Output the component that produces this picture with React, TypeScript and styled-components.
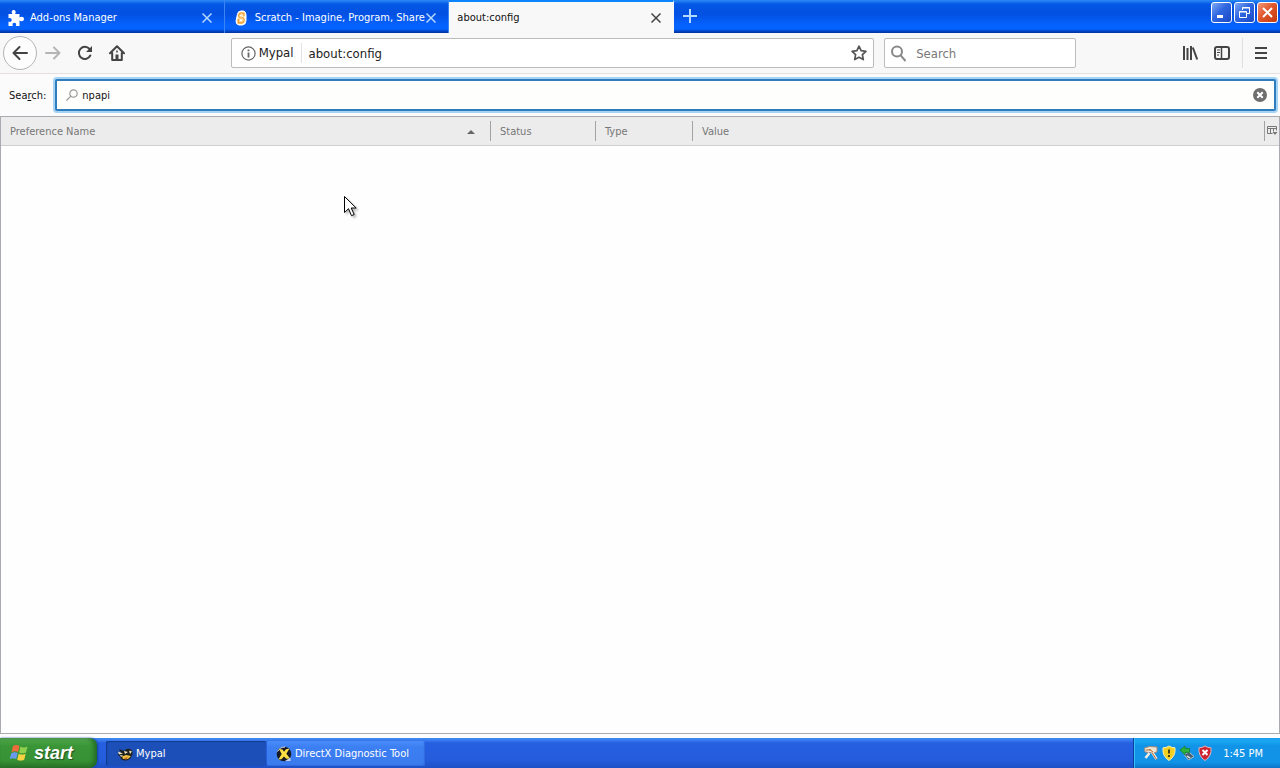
import React, { useState } from "react";
import styled, { createGlobalStyle, css } from "styled-components";

const ui = `"DejaVu Sans Condensed", "DejaVu Sans", "Noto Sans", sans-serif`;

const GlobalStyle = createGlobalStyle`
  *, *::before, *::after { box-sizing: border-box; }
  body { margin: 0; background: #fff; font: 11px/16px ${ui}; color: #111; }
  button, input { font: inherit; color: inherit; margin: 0; padding: 0; border: 0; background: none; }
  button { cursor: default; }
  svg { display: block; flex: none; }
`;

const Desktop = styled.div`
  display: flex;
  flex-direction: column;
  min-height: 100vh;
  background: #fdfdfd;
`;

/* Title bar with tabs */
const TitleBar = styled.header`
  display: flex;
  height: 33px;
  background: linear-gradient(#2b8bf5 0, #1a73ee 2px, #0458e4 4px, #0350e2 14px, #0561fb 24px, #0563fd 29px, #0448c8 31px, #02309a 33px);
`;

const Tabs = styled.div`
  display: flex;
  flex: 0 1 674px;
  min-width: 0;
`;

const Tab = styled.div<{ $active?: boolean }>`
  display: flex;
  flex: 1 1 0;
  min-width: 0;
  align-items: center;
  padding: 2px 12px 0 8px;
  color: #fff;
  border-right: 1px solid #3c85f4;
  ${(p) =>
    p.$active &&
    css`
      color: #111;
      background: #f8f8f9;
      border-top: 2px solid #0a84ff;
      border-right-color: #f8f8f9;
      padding-top: 0;
    `}
`;

const TabLabel = styled.button`
  display: flex;
  flex: 1;
  min-width: 0;
  gap: 6px;
  align-items: center;
  height: 24px;
  overflow: hidden;
  white-space: nowrap;
  text-align: left;
`;

const IconButton = styled.button<{ $size?: number }>`
  display: flex;
  flex: none;
  align-items: center;
  justify-content: center;
  width: ${(p) => p.$size ?? 32}px;
  height: ${(p) => p.$size ?? 32}px;
`;

const WindowButtons = styled.div`
  display: flex;
  gap: 2px;
  margin-left: auto;
  padding: 2px 2px 0 0;
`;

const WindowButton = styled.button<{ $close?: boolean }>`
  display: flex;
  align-items: center;
  justify-content: center;
  width: 21px;
  height: 21px;
  border: 1px solid #fff;
  border-radius: 3px;
  background: ${(p) =>
    p.$close
      ? "linear-gradient(135deg, #f0987a, #e2572c 45%, #c23a10)"
      : "linear-gradient(135deg, #7fa8f5, #2f66e0 45%, #1b48c4)"};
`;

/* Navigation toolbar */
const NavBar = styled.nav`
  display: flex;
  align-items: center;
  height: 41px;
  padding: 0 1px 0 3px;
  background: #f8f8f9;
  border-bottom: 1px solid #e6dfe2;
`;

const BackButton = styled.button`
  display: flex;
  align-items: center;
  justify-content: center;
  width: 34px;
  height: 34px;
  border: 1px solid #b4b4b6;
  border-radius: 50%;
  background: #fdfdfd;
`;

const Spring = styled.div`
  flex: 98 1 0;
`;

const Field = styled.div<{ $grow: number }>`
  display: flex;
  flex: ${(p) => p.$grow} 1 0;
  align-items: center;
  min-width: 0;
  height: 30px;
  border: 1px solid #bcbcbc;
  border-radius: 2px;
  background: #fff;
  color: #222;
  font-size: 13px;
`;

const SearchField = styled(Field)`
  margin-left: 10px;
`;

const Identity = styled.button`
  display: flex;
  flex: none;
  gap: 3px;
  align-items: center;
  height: 20px;
  padding: 0 8px 0 9px;
  border-right: 1px solid #e2e2e4;
`;

const FieldInput = styled.input`
  flex: 1;
  min-width: 0;
  height: 24px;
  padding: 0 6px;
  outline: 0;
  &::placeholder { color: #777; opacity: 1; }
`;

const MenuSlot = styled.div`
  display: flex;
  align-items: center;
  height: 30px;
  margin-left: 4px;
  border-left: 1px solid #e0e0e2;
`;

/* Preference filter */
const FilterRow = styled.form`
  display: flex;
  align-items: center;
  gap: 9px;
  height: 42px;
  padding: 0 4px 0 9px;
  background: #fbfbfc;
`;

const FilterLabel = styled.label`
  padding-top: 2px;
`;

const FilterBox = styled.div`
  display: flex;
  flex: 1;
  align-items: center;
  height: 32px;
  padding-left: 9px;
  border: 2px solid #2f7dbd;
  border-radius: 2px;
  box-shadow: 0 0 0 2px #a5d3f5;
  background: #fefffd;
`;

const FilterInput = styled(FieldInput)`
  padding: 0 4px;
`;

/* Preference table */
const TreeFrame = styled.main`
  flex: 1;
  margin-bottom: 4px;
  border: 1px solid #a8abb0;
  background: #fefefe;
`;

const Tree = styled.table`
  width: 100%;
  table-layout: fixed;
  border-collapse: separate;
  border-spacing: 0;
`;

const Col = styled.col<{ $w?: number }>`
  width: ${(p) => (p.$w ? `${p.$w}px` : "auto")};
`;

const HeadCell = styled.th`
  height: 29px;
  padding: 0;
  background: #ececec;
  border-bottom: 1px solid #cfcfcf;
  color: #777;
  font-weight: 400;
`;

const HeadButton = styled.button<{ $first?: boolean; $picker?: boolean }>`
  display: flex;
  align-items: center;
  justify-content: space-between;
  width: 100%;
  height: 20px;
  padding: ${(p) => (p.$picker ? "0 0 0 2px" : "2px 15px 0 9px")};
  border-left: ${(p) => (p.$first ? "0" : "1px solid #a2a2a2")};
`;

/* Taskbar */
const TaskBar = styled.footer`
  display: flex;
  height: 30px;
  color: #fff;
  background: linear-gradient(#3f8cf0 0, #3a7df0 2px, #265fe0 5px, #245cdc 22px, #1e50c6 30px);
`;

const StartButton = styled.button`
  display: flex;
  gap: 5px;
  align-items: center;
  width: 97px;
  padding: 0 0 0 9px;
  border-radius: 0 8px 8px 0;
  background: linear-gradient(#69b467 0, #49a345 3px, #3a9537 8px, #379235 22px, #2a7428 30px);
  box-shadow: inset -3px 0 4px #236a26, 1px 0 2px #1440a0;
  font: italic 700 18px/24px "Liberation Sans", sans-serif;
  text-shadow: 1px 1px 1px #1e5220;
`;

const Tasks = styled.div`
  display: flex;
  flex: 1;
  min-width: 0;
  gap: 1px;
  padding: 3px 8px 2px 9px;
`;

const Task = styled.button<{ $pressed?: boolean }>`
  display: flex;
  flex: 0 1 ${(p) => (p.$pressed ? 160 : 158)}px;
  align-items: center;
  gap: 3px;
  min-width: 0;
  padding-left: ${(p) => (p.$pressed ? 11 : 9)}px;
  border-radius: 2px;
  white-space: nowrap;
  background: ${(p) => (p.$pressed ? "#1d4fb8" : "linear-gradient(#4a8cf8, #3c7ff2 6px, #3a7bee)")};
  box-shadow: ${(p) => (p.$pressed ? "inset 1px 1px 1px #123a8c" : "inset -1px -1px 1px #2f6bdc")};
`;

const Tray = styled.div`
  display: flex;
  align-items: center;
  gap: 2px;
  padding: 0 17px 0 9px;
  border-left: 1px solid #0a3fa0;
  background: linear-gradient(#1f9cf0 0, #18a8f0 3px, #1193e8 8px, #1194e8 24px, #0f74c8 30px);
  box-shadow: inset 1px 0 0 #3cbcf8;
`;

const Clock = styled.time`
  padding: 1px 0 0 8px;
`;

/* The mouse pointer floats over the page */
const Pointer = styled.svg`
  position: absolute;
  left: 343px;
  top: 195px;
  filter: drop-shadow(2px 2px 1px #0004);
`;

const Cross = ({ color }: { color: string }) => (
  <svg width="10" height="10" viewBox="0 0 10 10" fill="none" stroke={color} strokeWidth="1.5">
    <path d="M.5.5l9 9M9.5.5l-9 9" />
  </svg>
);

const Puzzle = () => (
  <svg width="16" height="16" viewBox="0 0 16 16" fill="#fff">
    <path d="M.5 4h4C3.200 2.600 3.600 0 5.700 0S8.200 2.600 7 4H11.500v3.500c1.500-1.300 4.500-.9 4.500 1.500s-3 2.800-4.500 1.500V16H7.800c.9-1.600.2-3.200-1.500-3.200S4 14.400 4.900 16H.5v-4.500c1.500 1 3.200.2 3.200-1.500S2 7.300.5 8.300z" />
  </svg>
);

const ScratchMark = () => (
  <svg width="16" height="16" viewBox="0 0 16 16" fill="none" strokeLinecap="round" strokeLinejoin="round">
    <path d="M4.500 4Q5 1 8 1h2.500Q13 1.500 13 5v5.500q0 4-3.500 4.500H6Q3 14.500 3 11.500z" fill="#fff6e6" stroke="#fff" />
    <path d="M10.700 5.500V3.500Q6 2.200 6 5.500q0 2 2.500 2.300 2.500.4 2.300 2.700-.3 3-5.300 2.200V9.500" stroke="#f0a030" strokeWidth="2" />
    <path d="M10 6V4Q6.500 3.500 6.500 5.500q0 1.800 2 2.300 2 .6 1.800 2.500-.4 2-3.800 1.400" stroke="#fde0a8" strokeWidth=".8" />
  </svg>
);

const FlagMark = () => (
  <svg width="20" height="20" viewBox="0 0 20 20">
    <path d="M4 3q3.500-2 6.500 0L9 9Q6 7.500 2.500 9z" fill="#ef6b3c" />
    <path d="M11.500 3.500q3 1.800 7 0L17 9.500q-3.800 1.700-7 0z" fill="#8fd04c" />
    <path d="M2.200 10.200q3.500-1.700 6.500 0L7.200 16q-3-1.700-6.500 0z" fill="#6a9af0" />
    <path d="M9.700 10.700q3.400 1.700 7 0L15.200 16.700q-3.500 1.700-7 0z" fill="#f8d340" />
  </svg>
);

const BirdMark = () => (
  <svg width="16" height="16" viewBox="0 0 16 16">
    <path d="M0 5l4 1.500L2 3l5 2q3-3.500 7-1.500 2.500 2 1 6-2 5-7 5-4 0-5-4L.5 8.500l2.500-1z" fill="#1d211c" />
    <path d="M1 5.500l5 2-4 1zM7 5l4 1-3 2zM12 4.500l3 1-2 2.500zM3 9l3 .5-2 1.500z" fill="#efe6c4" />
    <path d="M5 10.500l4-1.500 5 1-3 3H6z" fill="#f0c340" />
    <path d="M7 12l4-1-2 3z" fill="#c36c20" />
  </svg>
);

const DirectXMark = () => (
  <svg width="16" height="16" viewBox="0 0 16 16">
    <circle cx="8" cy="8" r="7.300" fill="#171a24" />
    <path d="M1.500 5.500Q4 1 9 1" stroke="#e7eefb" fill="none" />
    <path d="M3 3l3.500.5L8 5.800l2-2.600 3.500-.7-3.200 5.200 3.700 4.800-3.700.2L8 10.400l-2.600 2.800-3 .2L5.700 8z" fill="#ffe042" />
    <path d="M9 15l5.500-3.500v3.500z" fill="#c8d5e8" />
  </svg>
);

const Shield = ({ alert }: { alert?: boolean }) => (
  <svg width="16" height="16" viewBox="0 0 16 16">
    <path
      d="M8 1q3 2 6 1.800Q15 11 8 15.500 1 11 2 2.800 5 3 8 1z"
      fill={alert ? "#cf2230" : "#f3cf20"}
      stroke={alert ? "#dfb5bd" : "#f5efb0"}
    />
    {alert ? (
      <path d="M5.500 5l5 5M10.500 5l-5 5" stroke="#fff" strokeWidth="2" />
    ) : (
      <path d="M8 4.500v4M8 10v2" stroke="#3b3410" strokeWidth="1.800" />
    )}
  </svg>
);

const ToolsMark = () => (
  <svg width="16" height="16" viewBox="0 0 16 16" fill="none">
    <path d="M1.500 3l5-1.500 7.500.5v5l-4 1-8-1z" fill="#eee5d3" stroke="#a58a78" />
    <path d="M9 7l4.500 7M6.500 8L2.500 13" stroke="#f4ede0" strokeWidth="2.500" />
    <path d="M9 7.500l4.500 7M3 5h5M6 4l4 3" stroke="#b8692c" />
  </svg>
);

const UsbMark = () => (
  <svg width="16" height="16" viewBox="0 0 16 16">
    <path d="M5 9.500l5-2.500 5 4.500L9.500 15z" fill="#4a5f70" stroke="#a9c0ca" />
    <path d="M1 5l5-4v2.500h4.500v4H6V10z" fill="#2db33c" stroke="#14782b" strokeWidth=".7" />
    <path d="M8 11l3 2" stroke="#e4eef0" strokeWidth="1.500" />
  </svg>
);

export default function App() {
  const [filter, setFilter] = useState("npapi");

  return (
    <>
      <GlobalStyle />
      <Desktop>
        <TitleBar>
          <Tabs>
            <Tab>
              <TabLabel><Puzzle />Add-ons Manager</TabLabel>
              <IconButton $size={10} aria-label="Close tab"><Cross color="#b5d9ff" /></IconButton>
            </Tab>
            <Tab>
              <TabLabel><ScratchMark />Scratch - Imagine, Program, Share</TabLabel>
              <IconButton $size={10} aria-label="Close tab"><Cross color="#b5d9ff" /></IconButton>
            </Tab>
            <Tab $active>
              <TabLabel>about:config</TabLabel>
              <IconButton $size={10} aria-label="Close tab"><Cross color="#444" /></IconButton>
            </Tab>
          </Tabs>
          <IconButton aria-label="New tab">
            <svg width="14" height="14" viewBox="0 0 14 14" stroke="#b5d9ff" strokeWidth="2">
              <path d="M7 0v14M0 7h14" />
            </svg>
          </IconButton>
          <WindowButtons>
            <WindowButton aria-label="Minimize">
              <svg width="15" height="15" viewBox="0 0 15 15"><path d="M3 10h6v3H3z" fill="#fff" /></svg>
            </WindowButton>
            <WindowButton aria-label="Restore">
              <svg width="15" height="15" viewBox="0 0 15 15" fill="none" stroke="#fff">
                <path d="M5.500 5V2.500h7v6H10M5 3h8" />
                <path d="M2.500 6.500h7v6h-7zM2 7h8" />
              </svg>
            </WindowButton>
            <WindowButton $close aria-label="Close">
              <svg width="15" height="15" viewBox="0 0 15 15" stroke="#fff" strokeWidth="2"><path d="M3 3l9 9M12 3l-9 9" /></svg>
            </WindowButton>
          </WindowButtons>
        </TitleBar>

        <NavBar>
          <BackButton aria-label="Back">
            <svg width="16" height="16" viewBox="0 0 16 16" fill="none" stroke="#444" strokeWidth="2" strokeLinecap="round" strokeLinejoin="round">
              <path d="M15 8H1.500M7.500 2l-6 6 6 6" />
            </svg>
          </BackButton>
          <IconButton aria-label="Forward">
            <svg width="16" height="16" viewBox="0 0 16 16" fill="none" stroke="#b5b5b7" strokeWidth="2" strokeLinecap="round" strokeLinejoin="round">
              <path d="M1 8h13.500M9 2.500L14.500 8 9 13.500" />
            </svg>
          </IconButton>
          <IconButton aria-label="Reload">
            <svg width="16" height="16" viewBox="0 0 16 16" fill="none" stroke="#444" strokeWidth="2" strokeLinecap="round">
              <path d="M13.300 10.500a6 6 0 1 1-.8-6.500" />
              <path d="M15 1v6H9z" fill="#444" stroke="none" />
            </svg>
          </IconButton>
          <IconButton aria-label="Home">
            <svg width="16" height="16" viewBox="0 0 16 16" fill="none" stroke="#444" strokeWidth="2" strokeLinecap="round" strokeLinejoin="round">
              <path d="M1 8.300L8 1.300l7 7M3.200 8v7h9.600V8" />
              <path d="M6.500 14.500v-5h3v5z" fill="#444" stroke="none" />
              <path d="M8 6v1" strokeWidth="1.500" />
            </svg>
          </IconButton>
          <Spring />
          <Field $grow={644}>
            <Identity>
              <svg width="15" height="15" viewBox="0 0 15 15" fill="none" stroke="#666" strokeWidth="1.200">
                <circle cx="7.500" cy="7.500" r="6.600" />
                <path d="M7.500 6.500v5M7.500 3.500v1.700" strokeWidth="1.800" />
              </svg>
              Mypal
            </Identity>
            <FieldInput aria-label="Address" defaultValue="about:config" />
            <IconButton $size={28} aria-label="Bookmark this page">
              <svg width="16" height="16" viewBox="0 0 16 16" fill="none" stroke="#555" strokeWidth="1.700" strokeLinejoin="round">
                <path d="M8 1.200l2.100 4.400 4.800.7-3.500 3.400.9 4.900L8 12.300l-4.300 2.300.9-4.900L1.100 6.300l4.800-.7z" />
              </svg>
            </IconButton>
          </Field>
          <SearchField $grow={191}>
            <IconButton $size={25} aria-label="Choose search engine">
              <svg width="17" height="17" viewBox="0 0 17 17" fill="none" stroke="#888" strokeWidth="2">
                <circle cx="8" cy="6.500" r="5" /><path d="M11.500 10.200l5 5.800" />
              </svg>
            </IconButton>
            <FieldInput aria-label="Web search" placeholder="Search" />
          </SearchField>
          <Spring />
          <IconButton aria-label="Library">
            <svg width="16" height="16" viewBox="0 0 16 16" fill="none" stroke="#444" strokeWidth="2">
              <path d="M2 1v14M5.500 3v12M9 1v14" /><path d="M10.800 2.500L15.200 14.500" />
            </svg>
          </IconButton>
          <IconButton aria-label="Sidebars">
            <svg width="16" height="16" viewBox="0 0 16 16" fill="none" stroke="#444" strokeWidth="2">
              <rect x="1" y="2" width="14" height="12" rx="2" /><path d="M7.500 2v12" strokeWidth="1.500" />
              <path d="M3 5h3M3 7.500h3M3 10h2" strokeWidth="1" />
            </svg>
          </IconButton>
          <MenuSlot>
            <IconButton $size={36} aria-label="Open menu">
              <svg width="12" height="12" viewBox="0 0 12 12" stroke="#444" strokeWidth="2"><path d="M0 1h12M0 6h12M0 11h12" /></svg>
            </IconButton>
          </MenuSlot>
        </NavBar>

        <FilterRow onSubmit={(e) => e.preventDefault()}>
          <FilterLabel htmlFor="filter">Sea<u>r</u>ch:</FilterLabel>
          <FilterBox>
            <svg width="12" height="12" viewBox="0 0 12 12" fill="none" stroke="#999" strokeWidth="1.200">
              <circle cx="7.500" cy="4.500" r="3.700" /><path d="M4.800 7.200L.5 11.500" />
            </svg>
            <FilterInput id="filter" value={filter} onChange={(e) => setFilter(e.target.value)} />
            <IconButton type="button" aria-label="Clear" $size={28} onClick={() => setFilter("")}>
              <svg width="14" height="14" viewBox="0 0 14 14">
                <circle cx="7" cy="7" r="7" fill="#6e6e6e" />
                <path d="M4.300 4.300l5.400 5.400M9.700 4.300L4.300 9.700" stroke="#fff" strokeWidth="2" />
              </svg>
            </IconButton>
          </FilterBox>
        </FilterRow>

        <TreeFrame>
          <Tree>
            <colgroup>
              <Col $w={489} /><Col $w={105} /><Col $w={97} /><Col /><Col $w={15} />
            </colgroup>
            <thead>
              <tr>
                <HeadCell scope="col" aria-sort="ascending">
                  <HeadButton $first>
                    Preference Name
                    <svg width="8" height="4" viewBox="0 0 8 4" fill="#666"><path d="M4 0l4 4H0z" /></svg>
                  </HeadButton>
                </HeadCell>
                <HeadCell scope="col"><HeadButton>Status</HeadButton></HeadCell>
                <HeadCell scope="col"><HeadButton>Type</HeadButton></HeadCell>
                <HeadCell scope="col"><HeadButton>Value</HeadButton></HeadCell>
                <HeadCell scope="col">
                  <HeadButton $picker aria-label="Select columns to display">
                    <svg width="11" height="10" viewBox="0 0 11 10" fill="none" stroke="#777">
                      <path d="M5.500 7.500h-5v-7h9v4M0 2.500h10M3.500 2.500v5M6.500 2.500v3" />
                      <path d="M5.500 6h5L8 9z" fill="#777" stroke="none" />
                    </svg>
                  </HeadButton>
                </HeadCell>
              </tr>
            </thead>
            <tbody />
          </Tree>
        </TreeFrame>

        <TaskBar>
          <StartButton><FlagMark />start</StartButton>
          <Tasks>
            <Task $pressed><BirdMark />Mypal</Task>
            <Task><DirectXMark />DirectX Diagnostic Tool</Task>
          </Tasks>
          <Tray>
            <ToolsMark /><Shield /><UsbMark /><Shield alert />
            <Clock>1:45 PM</Clock>
          </Tray>
        </TaskBar>
      </Desktop>
      <Pointer width="16" height="22" viewBox="0 0 16 22" aria-hidden="true">
        <path d="M1.500 1.500v16l4-3.800 3 7 2.700-1.200-3-6.500h5z" fill="#fff" stroke="#000" />
      </Pointer>
    </>
  );
}
